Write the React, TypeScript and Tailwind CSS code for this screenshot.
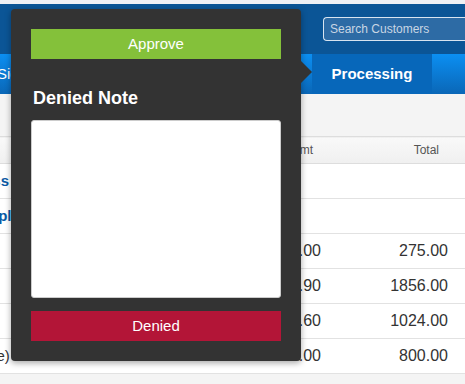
import { useState } from "react";

// ----------------------------------------------------------------------

const rows = [
  { name: "Address", link: true, amt: "", total: "" },
  { name: "Resample", link: true, amt: "", total: "" },
  { name: "", link: false, amt: "275.00", total: "275.00" },
  { name: "", link: false, amt: "1856.90", total: "1856.00" },
  { name: "", link: false, amt: "1024.60", total: "1024.00" },
  { name: "(Sample)", link: false, amt: "800.00", total: "800.00" },
];

function DeniedPopover() {
  const [note, setNote] = useState("");
  return (
    <div className="absolute left-[11px] top-[9px] flex w-[290px] flex-col rounded-[4px] bg-[#333333] px-5 pb-5 pt-5 shadow-[0_2px_6px_rgba(0,0,0,0.35)]">
      <span className="absolute right-[-11px] top-[52px] h-0 w-0 border-y-[11px] border-l-[11px] border-y-transparent border-l-[#333333]" />
      <button className="h-[30px] w-full bg-[#84c13a] text-[15px] leading-[30px] text-white">
        Approve
      </button>
      <h3 className="mt-[21px] pl-[2px] text-[18px] font-bold leading-[36px] text-white">
        Denied Note
      </h3>
      <textarea
        value={note}
        onChange={(e) => setNote(e.target.value)}
        className="mt-[4px] h-[178px] w-full resize-none rounded-[3px] border border-[#cccccc] bg-white p-2 text-sm outline-none"
      />
      <button className="mt-[13px] h-[30px] w-full bg-[#b31537] text-[15px] leading-[30px] text-white">
        Denied
      </button>
    </div>
  );
}

export default function App() {
  return (
    <div className="relative h-[384px] w-[465px] overflow-hidden bg-[#f4f4f4] font-['Liberation_Sans',Arial,sans-serif]">
      <div className="h-[4px] bg-[#eef0f4]" />
      <header className="flex h-[50px] items-center justify-end bg-[#0b5596] pl-[323px]">
        <input
          placeholder="Search Customers"
          className="h-[24px] w-full rounded-l-[4px] border border-r-0 border-[#d8e4f0] bg-[#2d6ba5] px-[6px] text-[12px] text-white placeholder:text-[#c9d6e4] outline-none"
        />
      </header>
      <nav className="flex h-[40px] bg-gradient-to-b from-[#0b8ff2] to-[#0a67b7] text-[15px] text-white">
        <div className="ml-[-3px] flex w-[315px] items-center whitespace-nowrap">Sign</div>
        <div className="flex w-[120px] items-center justify-center bg-[#0767ba] font-bold">
          Processing
        </div>
        <div className="flex-1" />
      </nav>
      <div className="h-[42px]" />
      <table className="ml-[-51px] w-[516px] table-fixed border-collapse text-[16px] text-[#333333]">
        <colgroup>
          <col className="w-[260px]" />
          <col className="w-[112px]" />
          <col className="w-[144px]" />
        </colgroup>
        <thead>
          <tr className="h-[27px] border-y border-[#dddddd] bg-gradient-to-b from-[#f9f9f9] to-[#f0f0f0] text-[12px] text-[#555555]">
            <th className="text-left font-normal" />
            <th className="pr-[8px] text-right font-normal">Amt</th>
            <th className="pr-[26px] text-right font-normal">Total</th>
          </tr>
        </thead>
        <tbody className="bg-white">
          {rows.map((r, i) => (
            <tr key={i} className="h-[35px] border-b border-[#e2e2e2]">
              <td
                className={
                  r.link
                    ? "whitespace-nowrap text-[15px] font-bold text-[#0a5aa5]"
                    : "whitespace-nowrap text-[15px]"
                }
              >
                {r.name}
              </td>
              <td className="text-right">{r.amt}</td>
              <td className="pr-[17px] text-right">{r.total}</td>
            </tr>
          ))}
        </tbody>
      </table>
      <DeniedPopover />
    </div>
  );
}
